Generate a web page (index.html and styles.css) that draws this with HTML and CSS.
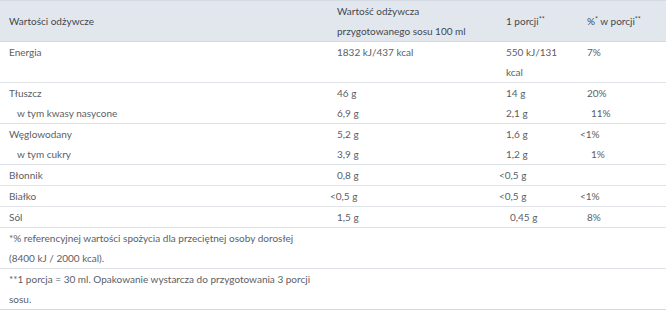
FILE: index.html
```html
<!DOCTYPE html>
<html lang="pl">
<head>
<meta charset="utf-8">
<link rel="stylesheet" href="styles.css">
</head>
<body>
<table class="nutri">
  <colgroup>
    <col class="c1"><col class="c2"><col class="c3"><col class="c4">
  </colgroup>
  <thead>
    <tr>
      <th>Wartości odżywcze</th>
      <th>Wartość odżywcza<br>przygotowanego sosu 100 ml</th>
      <th>1 porcji<span class="sup">**</span></th>
      <th>%<span class="sup">*</span> w porcji<span class="sup">**</span></th>
    </tr>
  </thead>
  <tbody>
    <tr class="grp">
      <td>Energia</td>
      <td>1832 kJ/437 kcal</td>
      <td class="narrow">550 kJ/131 kcal</td>
      <td>7%</td>
    </tr>
    <tr class="grp">
      <td>Tłuszcz</td><td>46 g</td><td>14 g</td><td>20%</td>
    </tr>
    <tr class="sub">
      <td class="ind">w tym kwasy nasycone</td><td>6,9 g</td><td>2,1 g</td><td class="p4">11%</td>
    </tr>
    <tr class="grp">
      <td>Węglowodany</td><td>5,2 g</td><td>1,6 g</td><td class="lt">&lt;1%</td>
    </tr>
    <tr class="sub">
      <td class="ind">w tym cukry</td><td>3,9 g</td><td>1,2 g</td><td class="p4">1%</td>
    </tr>
    <tr class="grp">
      <td>Błonnik</td><td>0,8 g</td><td class="lt">&lt;0,5 g</td><td></td>
    </tr>
    <tr class="grp">
      <td>Białko</td><td class="lt">&lt;0,5 g</td><td class="lt">&lt;0,5 g</td><td class="lt">&lt;1%</td>
    </tr>
    <tr class="grp">
      <td>Sól</td><td>1,5 g</td><td class="p4">0,45 g</td><td>8%</td>
    </tr>
    <tr class="grp">
      <td class="note">*% referencyjnej wartości spożycia dla przeciętnej osoby dorosłej (8400 kJ / 2000 kcal).</td>
      <td></td><td></td><td></td>
    </tr>
    <tr class="grp last">
      <td class="note">**1 porcja = 30 ml. Opakowanie wystarcza do przygotowania 3 porcji sosu.</td>
      <td></td><td></td><td></td>
    </tr>
  </tbody>
</table>
</body>
</html>
```

FILE: styles.css
```css
html, body {
  margin: 0;
  padding: 0;
  background: #ffffff;
}

.nutri {
  width: 666px;
  border-collapse: collapse;
  table-layout: fixed;
  font-family: Lato, "Open Sans", sans-serif;
  font-size: 10px;
  line-height: 20px;
  color: #5c6066;
}

.c1 { width: 328px; }
.c2 { width: 169px; }
.c3 { width: 81px; }
.c4 { width: 88px; }

.nutri thead tr {
  background: #e2e7ee;
  border-top: 1px solid #d3dae3;
  border-bottom: 1px solid #d3dae3;
}

.nutri th {
  font-weight: normal;
  text-align: left;
  color: #42484f;
  padding: 0 9px;
  vertical-align: middle;
}

.nutri td {
  padding: 0 9px;
  vertical-align: top;
  text-align: left;
}

.nutri tr.grp {
  border-top: 1px solid #dfe3e8;
}

.nutri tr.last {
  border-bottom: 1px solid #d3dae3;
}

.nutri td.ind {
  padding-left: 17px;
}

.nutri td.p4 {
  padding-left: 13px;
}

.nutri td.lt {
  padding-left: 2px;
}

.nutri td.narrow {
  padding-right: 20px;
}

.nutri td.note {
  padding-right: 12px;
}

.sup {
  display: inline-block;
  font-size: 7px;
  line-height: 7px;
  vertical-align: 3px;
}
```
